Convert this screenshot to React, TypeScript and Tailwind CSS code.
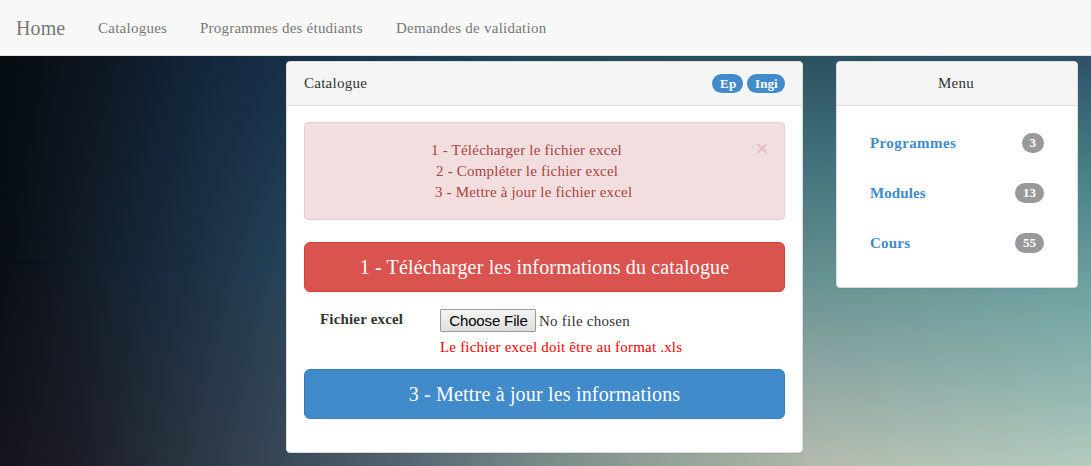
import React from "react";

const steps = [
  { text: "1 - Télécharger le fichier excel", cls: "pl-[126px] tracking-[0.22px]" },
  { text: "2 - Compléter le fichier excel", cls: "pl-[131px] tracking-[0.2px]" },
  { text: "3 - Mettre à jour le fichier excel", cls: "pl-[130px] tracking-[0.18px]" },
];

const menu = [
  { label: "Programmes", count: 3, cls: "tracking-[0.4px]" },
  { label: "Modules", count: 13, cls: "tracking-[0.1px]" },
  { label: "Cours", count: 55, cls: "tracking-[0.2px]" },
];

function Backdrop() {
  return (
    <div className="absolute inset-0 -z-10 bg-[linear-gradient(180deg,#2f5068_56px,#3c6b7a_120px,#4b8188_180px,#70a2a1_290px,#90b5af_380px,#b4cabe_466px)]">
      <div className="absolute inset-0 bg-[linear-gradient(180deg,#2a525f_56px,#3f6e78_150px,#669190_280px,#8da5a2_370px,#b3bbac_466px)] [mask-image:linear-gradient(90deg,#000_800px,transparent_1070px)]" />
      <div className="absolute inset-0 bg-[linear-gradient(90deg,#080e14_0px,#10161f_50px,#131d29_85px,#152534_130px,#1b2f43_190px,#21394f_240px,#26455a_290px,#204557_550px)] [mask-image:linear-gradient(90deg,#000_290px,transparent_800px)]" />
      <div className="absolute inset-y-0 left-0 w-[290px] bg-[linear-gradient(90deg,#15151c_0px,#1c1d27_80px,#242b36_140px,#2f3a47_210px,#3b4958_290px)] [mask-image:linear-gradient(180deg,transparent_260px,#000_466px)]" />
      <div className="absolute left-0 top-[56px] h-[210px] w-[290px] bg-[linear-gradient(90deg,#040c12_0px,#0c131c_75px,#0f1c2a_135px,#13273d_210px,#172f48_290px)] [mask-image:linear-gradient(180deg,#000,transparent)]" />
      <div className="absolute inset-x-0 top-[56px] h-[6px] bg-[linear-gradient(90deg,transparent_285px,#172f48_290px,#1c3c50_400px,#224858_550px,#2a525f_800px,transparent_810px)]" />
      <div className="absolute bottom-0 left-[286px] h-[14px] w-[518px] bg-[linear-gradient(90deg,#3b4958_0px,#566872_130px,#758785_240px,#93a097_370px,#adb6a9_518px)]" />
    </div>
  );
}

export default function App() {
  return (
    <div className="relative isolate h-[466px] w-full overflow-hidden font-['Liberation_Serif',serif] text-[15px] leading-[21px] tracking-[0.25px] text-[#333]">
      <Backdrop />
      <nav className="flex h-14 items-center border-b border-[#e7e7e7] bg-[#f8f8f8] pt-[2px] pl-4 text-[#777]">
        <a className="w-[82px] text-[20px] tracking-[0.1px]">Home</a>
        <a className="w-[102px]">Catalogues</a>
        <a className="w-[196px] tracking-[0.22px]">Programmes des étudiants</a>
        <a>Demandes de validation</a>
      </nav>

      <main className="flex items-start pt-[5px] pl-[286px]">
        <section className="h-[392px] w-[517px] overflow-hidden rounded-[4px] border border-[#ddd] bg-white shadow-[0_1px_1px_rgba(0,0,0,0.05)]">
          <header className="flex h-11 items-center justify-between border-b border-[#ddd] bg-[#f5f5f5] px-[17px]">
            <span>Catalogue</span>
            <div className="flex gap-1 text-[13px] leading-5 font-bold text-white">
              <span className="h-[19px] w-[31px] rounded-[10px] bg-[#428bca] pl-2">Ep</span>
              <span className="h-[19px] w-[38px] rounded-[10px] bg-[#428bca] pl-2 tracking-[0.1px]">Ingi</span>
            </div>
          </header>
          <div className="px-[17px] pt-4">
            <div className="flex h-[98px] justify-between rounded-[4px] border border-[#ebccd1] bg-[#f2dede] pt-[17px] pr-[17px] text-[#a94442]">
              <div>
                {steps.map((s) => (
                  <p key={s.text} className={s.cls}>
                    {s.text}
                  </p>
                ))}
              </div>
              <svg className="mt-[3px] h-[11px] w-[10px]" viewBox="0 0 10 11" stroke="#dfbcbf" strokeWidth="1.7">
                <path d="M.7 1.2 9.3 9.8M9.3 1.2.7 9.8" />
              </svg>
            </div>
            <button className="mt-[22px] block h-[50px] w-full rounded-[6px] border border-[#d43f3a] bg-[#d9534f] text-[20px] tracking-[0.16px] text-white">
              1 - Télécharger les informations du catalogue
            </button>
            <div className="mt-[17px] flex h-[60px] pl-4">
              <label className="w-[120px] font-bold tracking-[0.17px]">Fichier excel</label>
              <div>
                <div className="flex h-[23px] items-center">
                  <button className="mr-[3px] h-[23px] w-[96px] rounded-[1px] border border-[#999] bg-linear-to-b from-[#f6f6f6] to-[#dedede] pl-px font-['Liberation_Sans',sans-serif] leading-[21px] tracking-[-0.15px] whitespace-nowrap text-black">
                    Choose File
                  </button>
                  <span className="pt-[2px]">No file chosen</span>
                </div>
                <p className="pt-[5px] tracking-[0.2px] text-[#f00]">Le fichier excel doit être au format .xls</p>
              </div>
            </div>
            <button className="block h-[50px] w-full rounded-[6px] border border-[#357ebd] bg-[#428bca] text-[20px] tracking-[0.18px] text-white">
              3 - Mettre à jour les informations
            </button>
          </div>
        </section>

        <aside className="ml-[33px] h-[227px] w-[242px] overflow-hidden rounded-[4px] border border-[#ddd] bg-white shadow-[0_1px_1px_rgba(0,0,0,0.05)]">
          <header className="flex h-11 items-center justify-center border-b border-[#ddd] bg-[#f5f5f5] pr-[2px]">Menu</header>
          <ul className="px-[33px] pt-3">
            {menu.map((m) => (
              <li key={m.label} className="flex h-[50px] items-center justify-between font-bold text-[#428bca]">
                <a className={m.cls}>{m.label}</a>
                <span className="rounded-[10px] bg-[#999] px-2 text-[13px] leading-5 tracking-normal text-white">{m.count}</span>
              </li>
            ))}
          </ul>
        </aside>
      </main>
    </div>
  );
}
